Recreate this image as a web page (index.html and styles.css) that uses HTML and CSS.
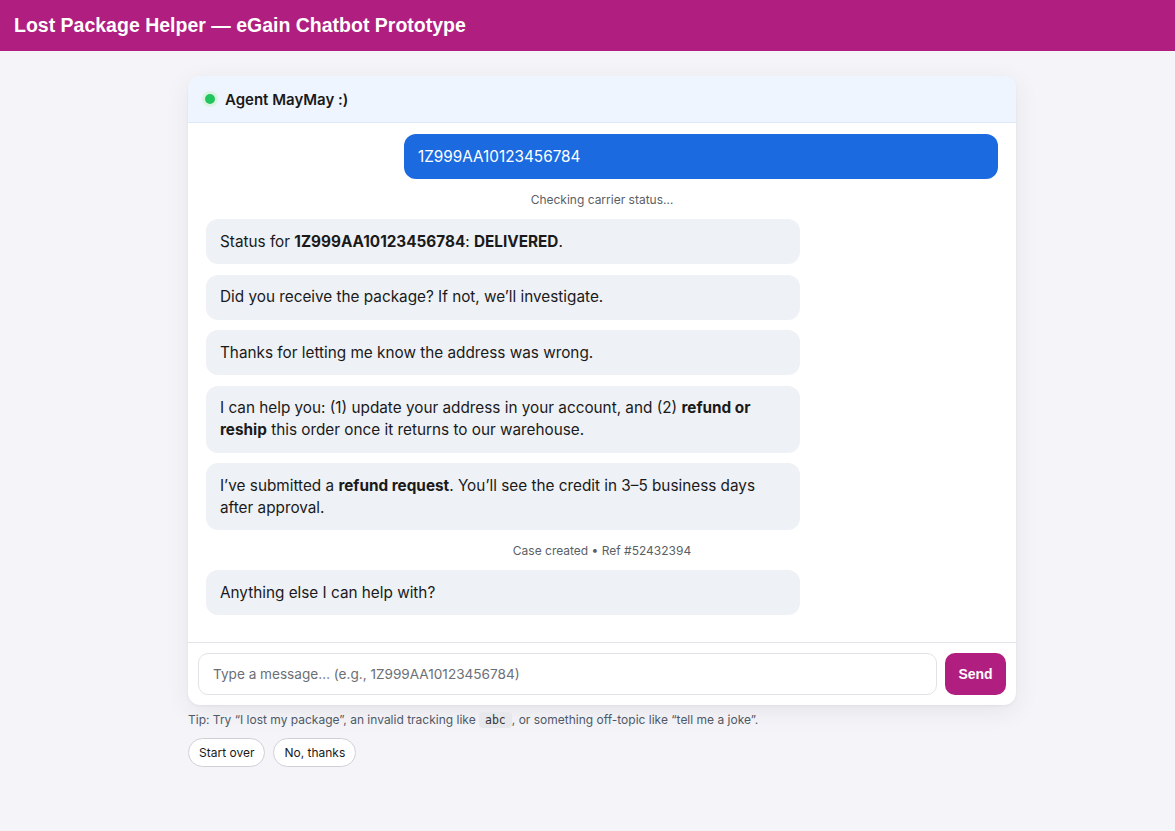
FILE: index.html
```html
<!DOCTYPE html>
<html lang="en">
<head>
<meta charset="utf-8">
<title>Lost Package Helper</title>
<link rel="stylesheet" href="styles.css">
</head>
<body>
<header class="topbar"><h1 class="title">Lost Package Helper — eGain Chatbot Prototype</h1></header>
<main class="wrap">
  <section class="card">
    <div class="card-head"><span class="dot"></span><span class="agent">Agent MayMay :)</span></div>
    <div class="messages">
      <div class="bubble user">1Z999AA10123456784</div>
      <div class="meta">Checking carrier status…</div>
      <div class="bubble bot">Status for <b>1Z999AA10123456784</b>: <b>DELIVERED</b>.</div>
      <div class="bubble bot">Did you receive the package? If not, we’ll investigate.</div>
      <div class="bubble bot">Thanks for letting me know the address was wrong.</div>
      <div class="bubble bot">I can help you: (1) update your address in your account, and (2) <b>refund or reship</b> this order once it returns to our warehouse.</div>
      <div class="bubble bot">I’ve submitted a <b>refund request</b>. You’ll see the credit in 3–5 business days after approval.</div>
      <div class="meta">Case created • Ref #52432394</div>
      <div class="bubble bot">Anything else I can help with?</div>
    </div>
    <form class="composer">
      <input class="input" type="text" placeholder="Type a message… (e.g., 1Z999AA10123456784)">
      <button class="send" type="button">Send</button>
    </form>
  </section>
  <p class="tip">Tip: Try “I lost my package”, an invalid tracking like <code class="code">abc</code>, or something off-topic like “tell me a joke”.</p>
  <div class="chips">
    <button class="chip" type="button">Start over</button>
    <button class="chip" type="button">No, thanks</button>
  </div>
</main>
</body>
</html>
```
FILE: styles.css
```css
* { box-sizing: border-box; }
html, body { margin: 0; padding: 0; }
body {
  background: #f5f5f9;
  font-family: Inter, "Noto Sans", sans-serif;
  color: #1a1a1a;
}
.topbar {
  background: #b01e7f;
  height: 51px;
  padding: 0 14px;
  display: flex;
  align-items: center;
}
.title {
  margin: 0;
  color: #fff;
  font-family: "Liberation Sans", Arial, sans-serif;
  font-size: 19.5px;
  font-weight: 700;
}
.wrap {
  width: 828px;
  margin: 25px 0 0 188px;
}
.card {
  background: #fff;
  border-radius: 12px;
  box-shadow: 0 6px 24px rgba(20, 20, 50, 0.08), 0 1px 3px rgba(20, 20, 50, 0.05);
  overflow: hidden;
}
.card-head {
  height: 47px;
  background: #eff5fe;
  border-bottom: 1px solid #dde8fa;
  display: flex;
  align-items: center;
  padding: 0 16px;
  gap: 10px;
}
.dot {
  width: 10px;
  height: 10px;
  border-radius: 50%;
  background: #22c55e;
  box-shadow: 0 0 0 3px #dcf3e4;
  margin-left: 1px;
}
.agent {
  font-weight: 600;
  font-size: 15px;
  color: #1a1a1a;
}
.messages {
  height: 520px;
  padding: 11px 18px 18px;
  display: flex;
  flex-direction: column;
  gap: 10.5px;
  border-bottom: 1px solid #e4e4e8;
}
.bubble {
  width: 75%;
  padding: 11.5px 14px;
  border-radius: 12px;
  font-size: 15.3px;
  line-height: 22px;
}
.bubble b { font-weight: 700; }
.user {
  align-self: flex-end;
  background: #1b6ae0;
  color: #fff;
}
.bot {
  align-self: flex-start;
  background: #eef1f6;
  color: #1a1a1a;
}
.meta {
  text-align: center;
  font-size: 12px;
  line-height: 19px;
  color: #5a5f66;
}
.composer {
  margin: 0;
  display: flex;
  gap: 8px;
  padding: 10px;
}
.input {
  flex: 1;
  height: 42px;
  border: 1px solid #e2e2e6;
  border-radius: 10px;
  padding: 0 14px;
  font-family: Inter, "Noto Sans", sans-serif;
  font-size: 13.6px;
  color: #1a1a1a;
  outline: none;
}
.input::placeholder { color: #6b6f76; }
.send {
  width: 61px;
  height: 42px;
  border: 0;
  border-radius: 10px;
  background: #b01e7f;
  color: #fff;
  font-family: "Liberation Sans", Arial, sans-serif;
  font-weight: 700;
  font-size: 14px;
}
.tip {
  margin: 7px 0 0;
  font-size: 12px;
  line-height: 16px;
  color: #4f5866;
}
.code {
  font-family: "DejaVu Sans Mono", "Liberation Mono", monospace;
  font-size: 11.5px;
  background: #e6e8ec;
  border-radius: 4px;
  padding: 1px 6px;
  color: #333;
}
.chips {
  display: flex;
  gap: 8px;
  margin-top: 10px;
}
.chip {
  height: 29px;
  padding: 0 10px;
  border: 1px solid #cfd0d6;
  border-radius: 15px;
  background: #fff;
  font-family: Inter, "Noto Sans", sans-serif;
  font-size: 12px;
  color: #1a1a1a;
}
```
